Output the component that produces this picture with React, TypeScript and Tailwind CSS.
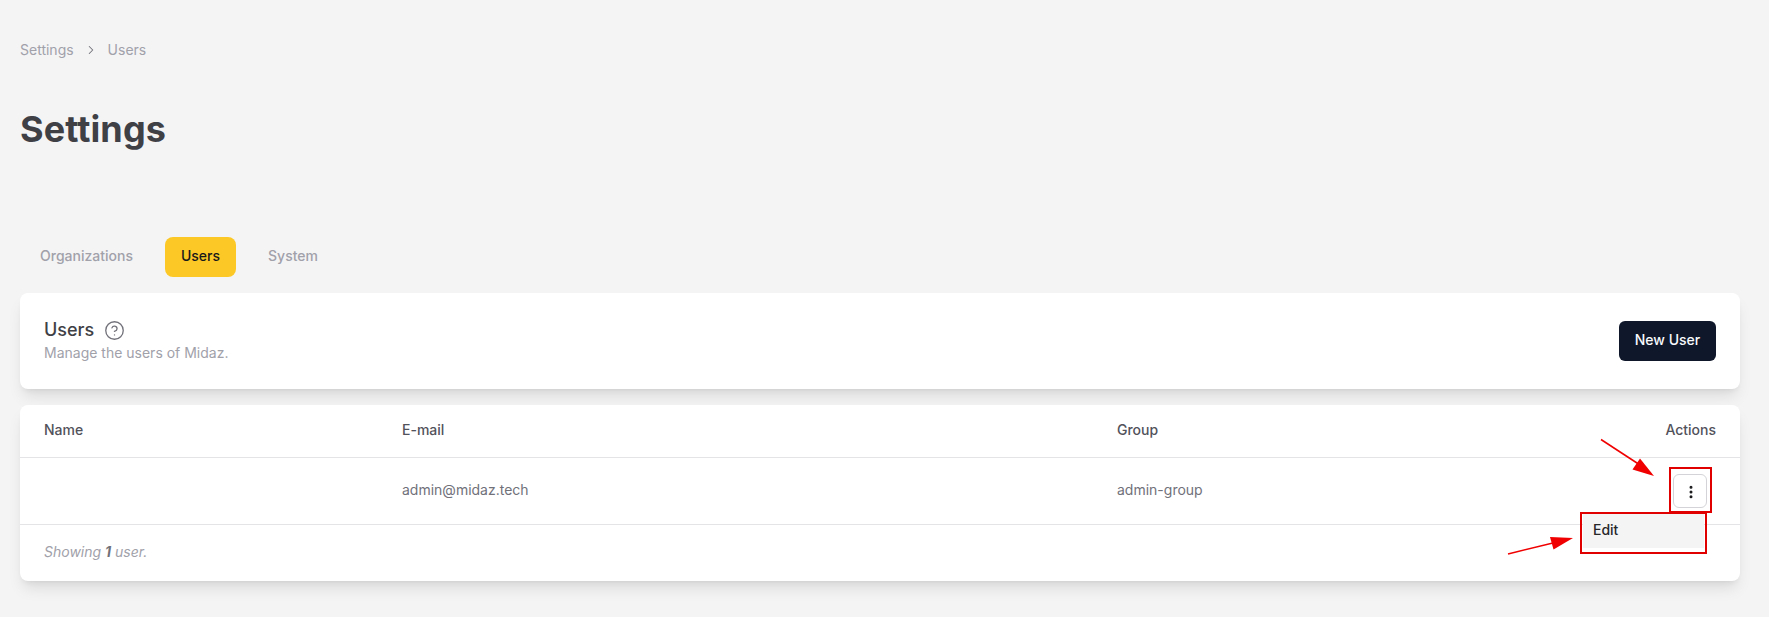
import { ChevronRight, CircleHelp, MoreVertical } from "lucide-react";

const tabs = ["Organizations", "Users", "System"];

const App = () => {
  return (
    <div className="relative h-[617px] overflow-hidden bg-[#f4f4f5] pt-10 pr-[29px] pl-5 font-['Inter',sans-serif]">
      {/* Breadcrumb */}
      <nav className="flex h-5 items-center text-sm text-[#a1a1aa]">
        <span>Settings</span>
        <ChevronRight size={14} strokeWidth={1.75} className="mx-[10px] text-[#71717a]" />
        <span>Users</span>
      </nav>

      {/* Title */}
      <h1 className="mt-[49px] h-10 text-4xl leading-10 font-bold tracking-[0.1px] text-[#3f3f46]">
        Settings
      </h1>

      {/* Tabs */}
      <div className="mt-[88px] flex gap-4 pl-1">
        {tabs.map((tab) =>
          tab === "Users" ? (
            <button
              key={tab}
              className="h-10 rounded-lg bg-[#fcc825] px-4 pb-0.5 text-sm font-medium text-[#18181b]"
            >
              {tab}
            </button>
          ) : (
            <button key={tab} className="h-10 px-4 pb-0.5 text-sm font-medium text-[#a1a1aa]">
              {tab}
            </button>
          ),
        )}
      </div>

      {/* Header card */}
      <div className="mt-4 flex h-24 items-center justify-between rounded-lg bg-white px-6 shadow-lg">
        <div>
          <div className="flex h-[22px] items-center gap-2.5">
            <h2 className="-mt-0.5 text-lg leading-6 font-medium text-[#3f3f46]">Users</h2>
            <CircleHelp size={21} strokeWidth={1.5} className="text-[#71717a]" />
          </div>
          <p className="mt-px text-sm leading-5 text-[#a1a1aa]">Manage the users of Midaz.</p>
        </div>
        <button className="h-10 w-[97px] rounded-md bg-[#0f172a] pb-0.5 text-sm font-medium text-[#f8fafc]">
          New User
        </button>
      </div>

      {/* Users table */}
      <div className="mt-4 rounded-lg bg-white shadow-lg">
        <div className="flex h-[53px] items-center border-b border-[#e4e4e7] px-6 pb-[3px] text-sm font-medium text-[#52525b]">
          <div className="w-[358px]">Name</div>
          <div className="w-[715px]">E-mail</div>
          <div className="flex-1">Group</div>
          <div>Actions</div>
        </div>
        <div className="flex h-[67px] items-center border-b border-[#e4e4e7] pr-[33px] pl-6 text-sm text-[#71717a]">
          <div className="w-[358px]"></div>
          <div className="w-[715px] pb-0.5">admin@midaz.tech</div>
          <div className="flex-1 pb-0.5">admin-group</div>
          <button className="flex h-[34px] w-[34px] items-center justify-center rounded-md border border-[#d4d4d8] bg-white pt-px pl-px text-[#18181b]">
            <MoreVertical size={16} strokeWidth={2.5} />
          </button>
        </div>
        <div className="flex h-14 items-center px-6 pb-[3px] text-sm text-[#a1a1aa] italic">
          <span>
            Showing <b className="font-bold text-[#71717a]">1</b> user.
          </span>
        </div>
      </div>

      {/* Open dropdown menu */}
      <div className="absolute top-[512px] left-[1583px] flex h-9 w-[121px] items-center bg-[#f4f4f5] px-2.5 text-sm font-medium text-[#27272a]">
        Edit
      </div>

      {/* Red annotations on the screenshot */}
      <div className="absolute top-[467px] left-[1669px] h-[46px] w-[43px] border-2 border-[#e00000]"></div>
      <div className="absolute top-[512px] left-[1580px] h-[42px] w-[127px] border-2 border-[#e00000]"></div>
      <svg className="absolute top-0 left-0" width="1769" height="617" fill="none">
        <path d="M1601 439.5 L1640 465" stroke="#f00000" strokeWidth="1.5" />
        <path d="M1654 476 L1632.5 469.5 L1640 458.5 Z" fill="#f00000" />
        <path d="M1508 554 L1555 542.5" stroke="#f00000" strokeWidth="1.5" />
        <path d="M1573 538 L1553.5 549.5 L1550 537 Z" fill="#f00000" />
      </svg>
    </div>
  );
};

export default App;
